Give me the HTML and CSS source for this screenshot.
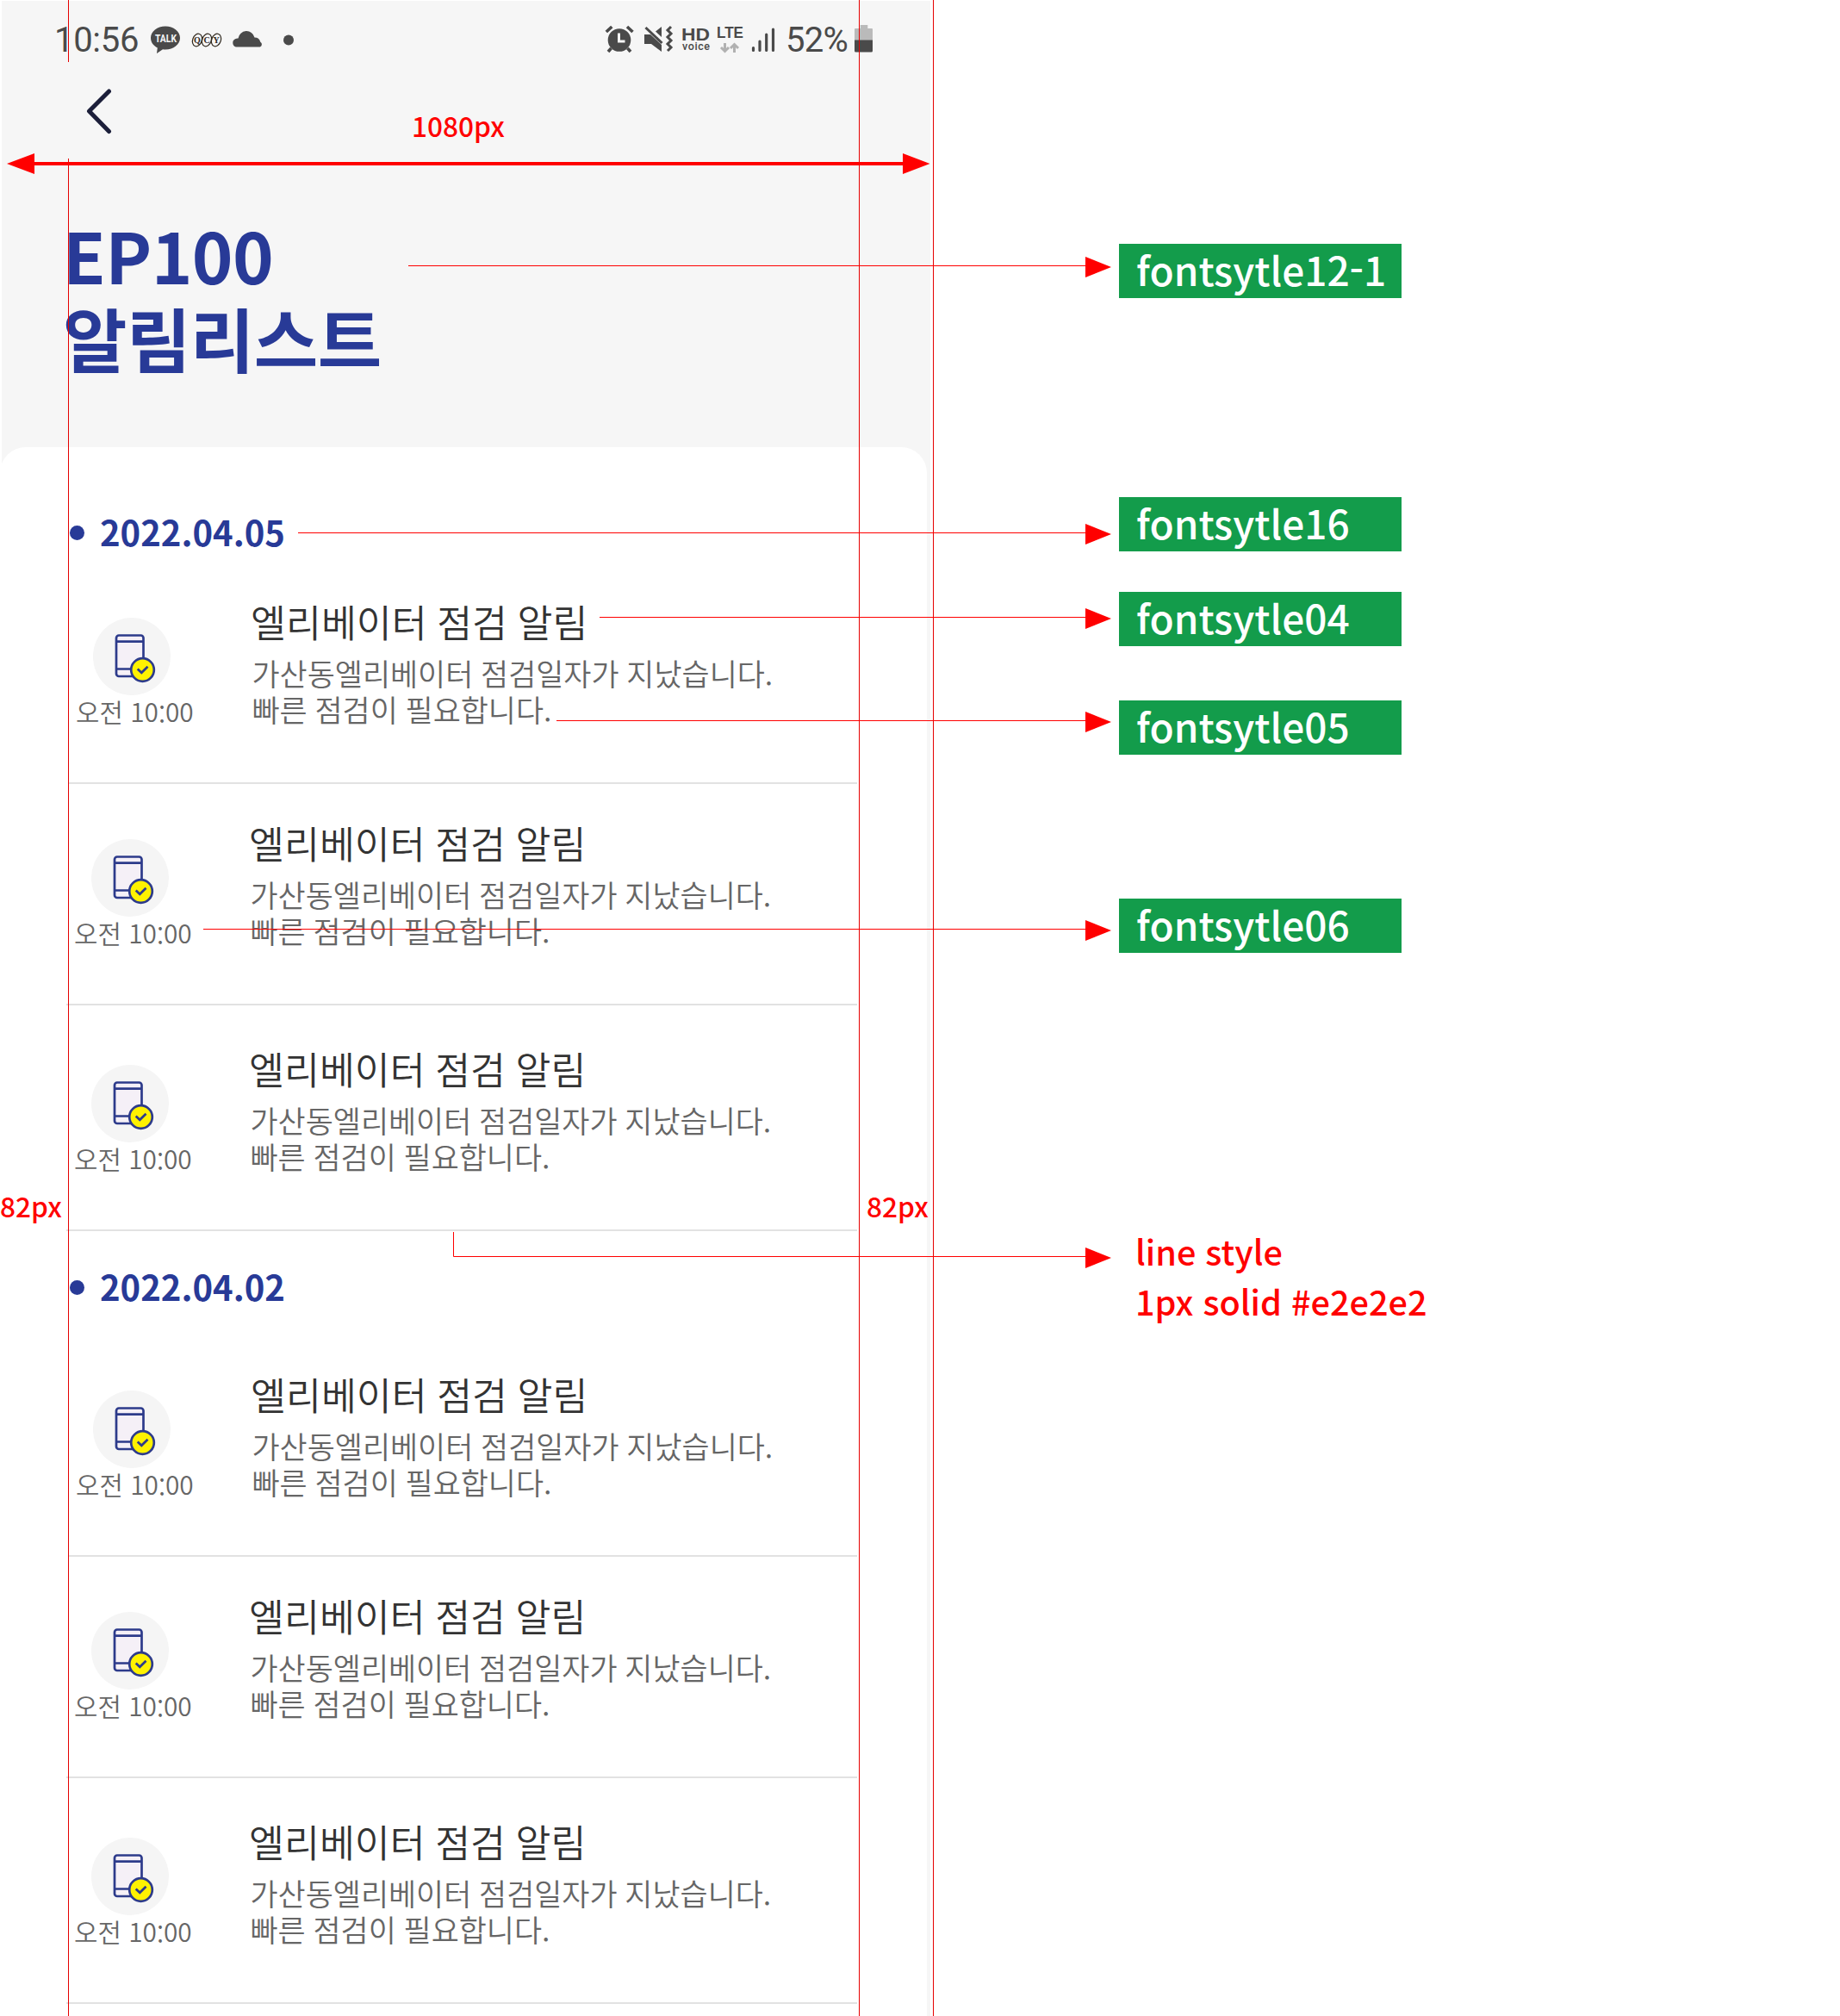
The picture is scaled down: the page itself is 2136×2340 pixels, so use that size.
FILE: index.html
```html
<!DOCTYPE html>
<html lang="ko">
<head>
<meta charset="utf-8">
<title>EP100 알림리스트</title>
<link rel="stylesheet" href="styles.css">
</head>
<body>
<svg class="defs" width="0" height="0">
  <symbol id="phone" viewBox="0 0 90 90">
    <circle cx="45" cy="45" r="45" fill="#f5f5f5"/>
    <rect x="27" y="20.500" width="31.500" height="47.500" rx="3" fill="#f5f0f7" stroke="#2d3b8b" stroke-width="2.700"/>
    <path d="M27 27.700H58.500M27 59.500H48" stroke="#2d3b8b" stroke-width="2.700"/>
    <circle cx="57.500" cy="60.500" r="13.300" fill="#fff200" stroke="#2d3b8b" stroke-width="2.700"/>
    <path d="M51.700 59.500l4.600 4.300 7.200-7" fill="none" stroke="#2d3b8b" stroke-width="2.700"/>
  </symbol>
</svg>
<div class="board">
  <main class="phone">
    <header class="head">
      <div class="status">
        <span class="clock">10:56</span>
        <svg class="left-icons" width="170" height="40" viewBox="0 0 170 40" fill="#4a4a4a">
          <path d="M20 4.500C29.500 4.500 37 10.500 37 18S29.500 31.500 20 31.500q-1.500 0-3-.2L10 36l.8-6.500C6 27 3 23 3 18 3 10.500 10.500 4.500 20 4.500z"/>
          <text x="8" y="23" class="talk" textLength="25" lengthAdjust="spacingAndGlyphs">TALK</text>
          <g fill="none" stroke="#30291f" stroke-width="1.200">
            <ellipse cx="57" cy="20.500" rx="5.300" ry="7.500" transform="rotate(20 57 20.500)"/>
            <ellipse cx="68" cy="20.500" rx="5.300" ry="7.500" transform="rotate(20 68 20.500)"/>
            <ellipse cx="79" cy="20.500" rx="5.300" ry="7.500" transform="rotate(20 79 20.500)"/>
          </g>
          <g class="qcy"><text x="53" y="24">Q</text><text x="64.500" y="24">C</text><text x="75.500" y="24">Y</text></g>
          <path d="M102 28.500a5 5 0 0 1-1-9.300q1.500-.9 3.500-.8a9.700 9.700 0 0 1 19-1q5.500 0 6.800 5.300a3.200 3.200 0 0 1-.5 5.800z"/>
          <circle cx="163" cy="20.500" r="6"/>
        </svg>
        <svg class="right-icons" width="204" height="40" viewBox="0 0 204 40" fill="#4a4a4a">
          <circle cx="19" cy="20.500" r="13.300"/>
          <path d="M3.800 11l6.500-6M34.500 11l-6.500-6M9.500 30l-3.500 4M28.500 30l3.500 4" stroke="#4a4a4a" stroke-width="3.600"/>
          <path d="M18.500 12.500v9.500h7" fill="none" stroke="#f6f6f6" stroke-width="3"/>
          <path d="M48 14h7l13 12v8L56 25h-8zM61 10.500l7-5.500v12z"/>
          <path d="M49.500 6l19 18" stroke="#4a4a4a" stroke-width="3"/>
          <path d="M78.500 5.500l-4 4 4 4-4 4 4 4-4 4 4 4-4 4" transform="translate(.5 -.5)" fill="none" stroke="#4a4a4a" stroke-width="3"/>
          <text x="91" y="21" class="hd" textLength="33" lengthAdjust="spacingAndGlyphs">HD</text>
          <text x="92" y="31.700" class="voice" textLength="32">voice</text>
          <text x="132" y="18" class="lte" textLength="31" lengthAdjust="spacingAndGlyphs">LTE</text>
          <path d="M141.500 24v10m-4.500-5l4.500 4.500L146 29M152.500 35v-10m-4.500 5l4.500-4.500 4.500 4.500" fill="none" stroke="#b1b1b1" stroke-width="3"/>
          <path d="M174.500 29.500v3M182 22v10.500M189.700 14v18.500M197.500 8v24.500" stroke="#4a4a4a" stroke-width="3.200" stroke-linecap="round"/>
        </svg>
        <span class="percent">52%</span>
        <svg class="battery" width="21" height="32" viewBox="0 0 22 32" preserveAspectRatio="none">
          <path d="M7 0h9v4h5a1 1 0 0 1 1 1v13H0V5a1 1 0 0 1 1-1h6z" fill="#bababa"/>
          <path d="M0 17.500h22V30a1.500 1.500 0 0 1-1.500 1.500h-19A1.500 1.500 0 0 1 0 30z" fill="#4a4a4a"/>
        </svg>
      </div>
      <svg class="back" width="30" height="54" viewBox="0 0 30 54"><path d="M26.500 4L3.500 27 26.500 50.500" fill="none" stroke="#1c1f3a" stroke-width="5" stroke-linecap="round" stroke-linejoin="round"/></svg>
      <h1 class="title">EP100<br>알림리스트</h1>
    </header>
    <div class="sheet">
      <section class="group">
        <h2 class="date">2022.04.05</h2>
        <article class="row first">
          <div class="when"><svg class="icon"><use href="#phone"/></svg><time>오전 10<span class="colon">:</span>00</time></div>
          <div class="text"><h3>엘리베이터 점검 알림</h3><p>가산동엘리베이터 점검일자가 지났습니다.<br>빠른 점검이 필요합니다.</p></div>
        </article>
        <article class="row">
          <div class="when"><svg class="icon"><use href="#phone"/></svg><time>오전 10<span class="colon">:</span>00</time></div>
          <div class="text"><h3>엘리베이터 점검 알림</h3><p>가산동엘리베이터 점검일자가 지났습니다.<br>빠른 점검이 필요합니다.</p></div>
        </article>
        <article class="row last">
          <div class="when"><svg class="icon"><use href="#phone"/></svg><time>오전 10<span class="colon">:</span>00</time></div>
          <div class="text"><h3>엘리베이터 점검 알림</h3><p>가산동엘리베이터 점검일자가 지났습니다.<br>빠른 점검이 필요합니다.</p></div>
        </article>
      </section>
      <section class="group later">
        <h2 class="date">2022.04.02</h2>
        <article class="row first">
          <div class="when"><svg class="icon"><use href="#phone"/></svg><time>오전 10<span class="colon">:</span>00</time></div>
          <div class="text"><h3>엘리베이터 점검 알림</h3><p>가산동엘리베이터 점검일자가 지났습니다.<br>빠른 점검이 필요합니다.</p></div>
        </article>
        <article class="row">
          <div class="when"><svg class="icon"><use href="#phone"/></svg><time>오전 10<span class="colon">:</span>00</time></div>
          <div class="text"><h3>엘리베이터 점검 알림</h3><p>가산동엘리베이터 점검일자가 지났습니다.<br>빠른 점검이 필요합니다.</p></div>
        </article>
        <article class="row last">
          <div class="when"><svg class="icon"><use href="#phone"/></svg><time>오전 10<span class="colon">:</span>00</time></div>
          <div class="text"><h3>엘리베이터 점검 알림</h3><p>가산동엘리베이터 점검일자가 지났습니다.<br>빠른 점검이 필요합니다.</p></div>
        </article>
      </section>
    </div>
  </main>
  <aside class="specs">
    <div class="tag t12">fontsytle12-1</div>
    <div class="tag t16">fontsytle16</div>
    <div class="tag t04">fontsytle04</div>
    <div class="tag t05">fontsytle05</div>
    <div class="tag t06">fontsytle06</div>
    <p class="line-note">line style<br>1px solid #e2e2e2</p>
  </aside>
  <svg class="guides" width="2136" height="2340" viewBox="0 0 2136 2340" fill="none" stroke="#f00">
    <g stroke="#e60000">
      <path d="M79.500 0V72M79.500 184V2340M997.500 0V2340M1083.500 0V2340"/>
    </g>
    <path d="M38 190H1050" stroke-width="4"/>
    <path d="M474 308.500H1262M346 618.500H1262M696 716.500H1262M646 836.500H1262M236 1078.500H1262M526.500 1430V1458.500H1262"/>
    <g fill="#f00" stroke="none">
      <path d="M8 190L40 178V202zM1079.500 190L1048 178V202z"/>
      <path d="M1260 298l30 12-30 12zM1260 608l30 12-30 12zM1260 706l30 12-30 12zM1260 826l30 12-30 12zM1260 1068l30 12-30 12zM1260 1448l30 12-30 12z"/>
    </g>
  </svg>
  <span class="measure width">1080px</span>
  <span class="measure left">82px</span>
  <span class="measure right">82px</span>
</div>
</body>
</html>
```
FILE: styles.css
```css
* { box-sizing: border-box; margin: 0; padding: 0; }
body { background: #fff; font-family: "Noto Sans CJK KR", sans-serif; }
.defs { position: absolute; }
.board { position: relative; width: 2136px; height: 2340px; overflow: hidden; display: flex; align-items: flex-start; background: #fff; }
.phone { width: 1078px; margin: 1px 0 0 2px; flex: none; background: #f6f6f6; }
.head { height: 518px; }
.status { display: flex; height: 72px; padding: 25px 0 0 61px; align-items: flex-start; }
.clock, .percent { flex: none; font-family: Roboto, sans-serif; font-size: 40px; line-height: 42px; color: #4a4a4a; letter-spacing: -0.3px; white-space: nowrap; }
.clock { width: 109px; }
.left-icons { flex: none; }
.right-icons { flex: none; margin-left: 358px; }
.percent { width: 80px; margin-left: 8px; letter-spacing: -0.7px; }
.battery { flex: none; margin-top: 3px; }
.talk { font: bold 12px Roboto, sans-serif; fill: #f6f6f6; }
.qcy { font: bold 10px "Liberation Serif", serif; fill: #30291f; }
.hd { font: bold 20px "Liberation Sans", sans-serif; }
.voice { font: 500 12.500px Roboto, sans-serif; }
.lte { font: bold 19px "Liberation Sans", sans-serif; }
.back { display: block; margin: 29px 0 0 98px; }
.title { margin: 91px 0 0 71px; font-size: 81px; line-height: 96px; font-weight: 700; letter-spacing: -0.6px; color: #283a97; white-space: nowrap; }
.sheet { width: 1076px; margin-left: -2px; height: 1821px; background: #fff; border-radius: 30px 30px 0 0; padding-top: 72px; overflow: hidden; }
.group { width: 918px; margin-left: 77px; }
.date { display: flex; align-items: center; gap: 18px; height: 56px; padding: 0 0 4px 4px; color: #283a97; font-size: 40px; line-height: 52px; font-weight: 700; }
.date::before { content: ""; width: 17px; height: 17px; margin-top: 3px; border-radius: 50%; background: #283a97; }
.row { display: flex; height: 257px; padding: 64px 0 0 8px; border-bottom: 2px solid #e2e2e2; }
.row.first { height: 263px; margin-left: 2px; padding-top: 70px; }
.row.last { height: 262px; padding-top: 69px; }
.later .date { margin-top: 38px; }
.later .row.first { height: 284px; padding-top: 91px; }
.when { width: 204px; flex: none; }
.icon { display: block; width: 90px; height: 90px; margin-left: 21px; }
time { display: block; height: 40px; margin: -2px 0 0 1px; font-size: 29.8px; line-height: 40px; color: #666; font-weight: 350; white-space: nowrap; }
.colon { line-height: 1; vertical-align: -3px; }
.text { margin-top: -26px; white-space: nowrap; }
h3 { font-size: 44.5px; line-height: 60px; font-weight: 350; word-spacing: -1px; color: #333; }
.text p { margin: 9px 0 0 1.5px; font-size: 34.900px; line-height: 42px; font-weight: 350; word-spacing: -1px; color: #666; }
.specs { margin-left: 219px; padding-top: 283px; width: 420px; }
.tag { width: 328px; height: 63px; padding-left: 20px; background: #139c4b; color: #fff; font-size: 46px; line-height: 59px; font-weight: 500; white-space: nowrap; }
.t16 { margin-top: 231px; }
.t04 { margin-top: 47px; }
.t05 { margin-top: 63px; }
.t06 { margin-top: 167px; }
.line-note { margin: 317px 0 0 19px; color: #f00; font-size: 39.600px; line-height: 58px; font-weight: 500; white-space: nowrap; }
.guides { position: absolute; left: 0; top: 0; }
.measure { position: absolute; color: #f00; font-size: 31.600px; line-height: 40px; font-weight: 500; white-space: nowrap; }
.measure.width { left: 478px; top: 125px; }
.measure.left { left: 0; top: 1379px; }
.measure.right { left: 1006px; top: 1379px; }
```
